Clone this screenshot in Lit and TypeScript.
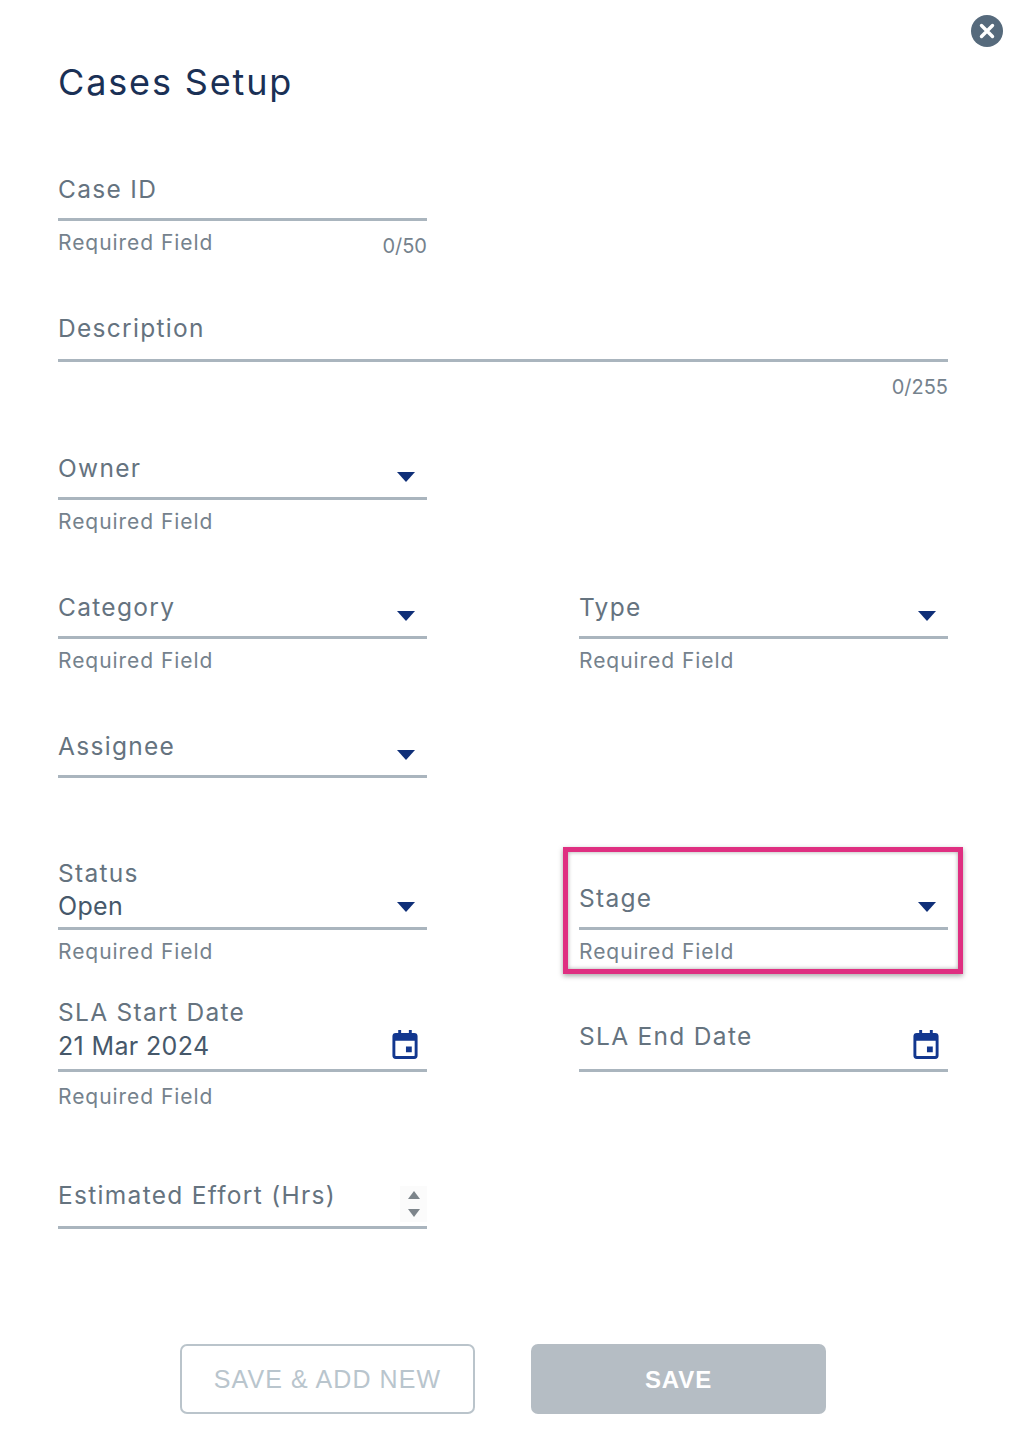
import { LitElement, html, css, nothing } from "lit";
import { customElement, property } from "lit/decorators.js";

const caret = html`<svg class="icon caret" viewBox="0 0 18 10"><path d="M0 0H18L9 10Z" fill="#0f2f78"/></svg>`;
const calendar = html`<svg class="icon cal" viewBox="0 0 26 30"><path fill="#12378f" d="M6 0h3v3h8V0h3v3h2.500A3.500 3.500 0 0 1 26 6.500V26.500A3.500 3.500 0 0 1 22.500 30H3.500A3.500 3.500 0 0 1 0 26.500V6.500A3.500 3.500 0 0 1 3.500 3H6ZM3 11V26a1 1 0 0 0 1 1H22a1 1 0 0 0 1-1V11ZM14 17h6v6h-6Z" fill-rule="evenodd"/></svg>`;
const spinner = html`<span class="spinbox"><svg class="spin" viewBox="0 0 14 30"><path d="M7 2l6 8H1Z M7 28l-6-8h12Z" fill="#7d858b"/></svg></span>`;

@customElement("form-field")
class FormField extends LitElement {
  @property() label = "";
  @property() value = "";
  @property() helper = "";
  @property() counter = "";
  @property() kind = "";
  static styles = css`
    :host { display: block; position: relative; font-family: Inter, "Liberation Sans", sans-serif; }
    .control { position: relative; height: 60px; border-bottom: 3px solid #aab5be; box-sizing: border-box; display: flex; flex-direction: column; justify-content: flex-end; }
    .label { font-size: 24.500px; letter-spacing: 1.300px; color: #65737f; line-height: 28px; padding-bottom: 15px; }
    .raised .label { padding-bottom: 17px; }
    .date .label { padding-bottom: 19px; }
    .filled .label { padding-bottom: 5px; }
    .value { font-size: 25px; letter-spacing: 0.350px; color: #46586a; line-height: 28px; padding-bottom: 7px; }
    .date .value { padding-bottom: 9px; }
    .date.filled .label { padding-bottom: 6px; }
    .icon { position: absolute; display: block; }
    .caret { right: 12px; bottom: 15px; width: 18px; height: 10px; }
    .cal { right: 9px; bottom: 10px; width: 26px; height: 29px; }
    .spinbox { position: absolute; right: 0; bottom: 4px; width: 27px; height: 36px; background: #fbfbfb; display: flex; align-items: center; justify-content: center; }
    .spin { width: 14px; height: 30px; display: block; }
    .below { display: flex; justify-content: space-between; font-size: 21px; letter-spacing: 0.950px; color: #75828d; line-height: 24px; padding-top: 10px; }
    .below.date { padding-top: 13px; }
    .count { font-size: 20px; letter-spacing: 0; padding-top: 3px; margin-left: auto; }
  `;
  render() {
    const icon = this.kind === "select" ? caret : this.kind === "date" ? calendar : this.kind === "number" ? spinner : nothing;
    const raised = this.kind === "number" || !this.kind && !this.helper ? "raised" : "";
    return html`
      <div class="control ${this.kind} ${raised} ${this.value ? "filled" : ""}">
        <div class="label">${this.label}</div>
        ${this.value ? html`<div class="value">${this.value}</div>` : nothing}
        ${icon}
      </div>
      ${this.helper || this.counter
        ? html`<div class="below ${this.kind}">
            ${this.helper ? html`<span>${this.helper}</span>` : nothing}
            ${this.counter ? html`<span class="count">${this.counter}</span>` : nothing}
          </div>`
        : nothing}
    `;
  }
}

@customElement("app-root")
class AppRoot extends LitElement {
  static styles = css`
    :host { display: block; width: 1022px; height: 1440px; background: #fff; font-family: Inter, "Liberation Sans", sans-serif; overflow: hidden; }
    .dialog { box-sizing: border-box; height: 1440px; padding: 15px 19px 0 58px; display: flex; flex-direction: column; }
    .close { align-self: flex-end; width: 32px; height: 32px; display: block; }
    h1 { margin: 13px 0 0; font-size: 36px; line-height: 44px; font-weight: 400; letter-spacing: 1.850px; color: #1a3055; }
    .grid { margin-top: 57px; width: 890px; display: grid; grid-template-columns: 369px 369px; column-gap: 152px; grid-template-rows: 141px 138px 139px 139px 152px 142px 157px 60px; }
    .wide { grid-column: 1 / 3; }
    .left { grid-column: 1; }
    .right { grid-column: 2; position: relative; }
    .mark { position: absolute; left: -16px; right: -15px; top: -23px; height: 127px; box-sizing: border-box; border: 5px solid #df2f81; box-shadow: 0 2px 5px rgba(0,0,0,.35), inset 0 0 4px rgba(0,0,0,.35); pointer-events: none; }
    .actions { margin-top: 115px; display: flex; gap: 56px; padding-left: 122px; }
    button { width: 295px; height: 70px; border-radius: 7px; font-family: "Liberation Sans", Arial, sans-serif; font-size: 25px; letter-spacing: 1.100px; box-sizing: border-box; padding: 1px 0 0; }
    .ghost { background: #fff; border: 2px solid #bac4cb; color: #b9c5cd; }
    .solid { background: #b5bdc4; border: 0; color: #fff; font-weight: 700; font-size: 24px; letter-spacing: 0.900px; }
  `;
  render() {
    return html`
      <div class="dialog">
        <svg class="close" viewBox="0 0 32 32"><circle cx="16" cy="16" r="16" fill="#566a7c"/><path d="M10.500 10.500l11 11M21.500 10.500l-11 11" stroke="#fff" stroke-width="3.400" stroke-linecap="round"/></svg>
        <h1>Cases Setup</h1>
        <div class="grid">
          <form-field class="left" label="Case ID" helper="Required Field" counter="0/50"></form-field>
          <form-field class="wide" label="Description" counter="0/255"></form-field>
          <form-field class="left" label="Owner" helper="Required Field" kind="select"></form-field>
          <form-field class="left" label="Category" helper="Required Field" kind="select"></form-field>
          <form-field class="right" label="Type" helper="Required Field" kind="select"></form-field>
          <form-field class="left" label="Assignee" kind="select"></form-field>
          <form-field class="left" label="Status" value="Open" helper="Required Field" kind="select"></form-field>
          <div class="right">
            <form-field label="Stage" helper="Required Field" kind="select"></form-field>
            <div class="mark"></div>
          </div>
          <form-field class="left" label="SLA Start Date" value="21 Mar 2024" helper="Required Field" kind="date"></form-field>
          <form-field class="right" label="SLA End Date" kind="date"></form-field>
          <form-field class="left" label="Estimated Effort (Hrs)" kind="number"></form-field>
        </div>
        <div class="actions">
          <button class="ghost">SAVE &amp; ADD NEW</button>
          <button class="solid">SAVE</button>
        </div>
      </div>
    `;
  }
}
